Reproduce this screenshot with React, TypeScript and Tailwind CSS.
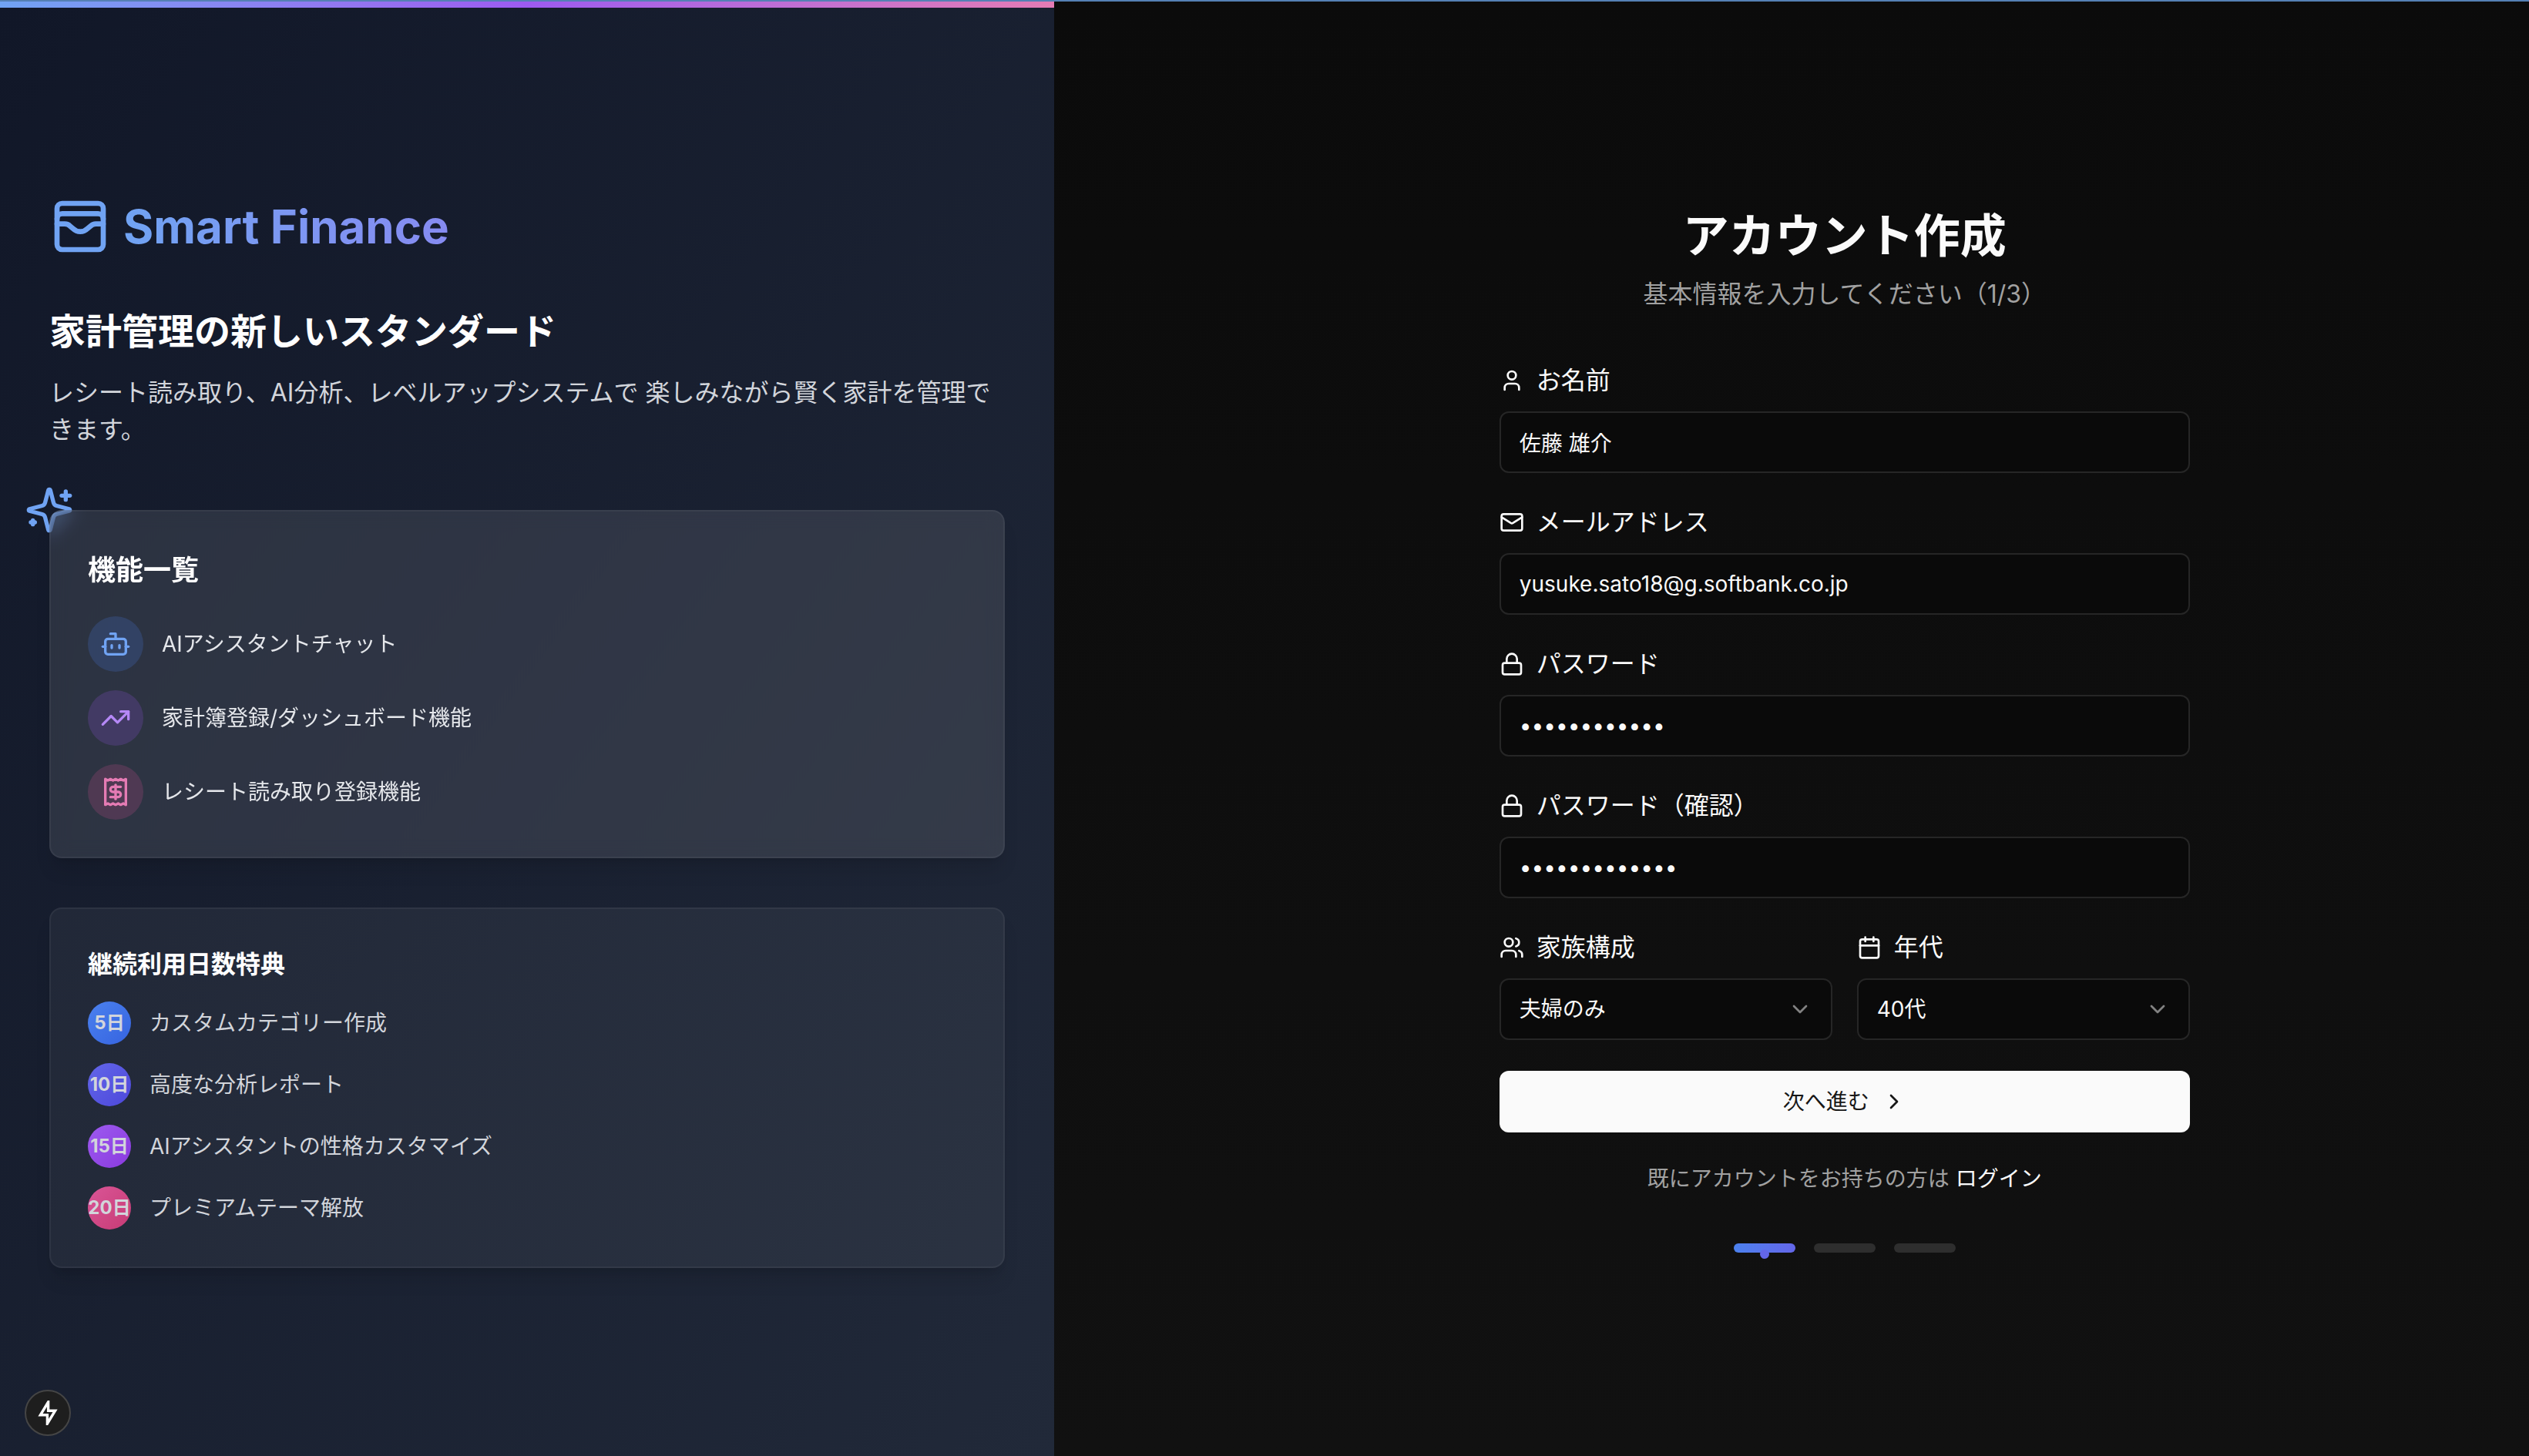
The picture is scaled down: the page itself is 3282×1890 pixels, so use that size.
import type { ReactNode } from "react";
import {
  Bot,
  Calendar,
  ChevronDown,
  ChevronRight,
  Lock,
  Mail,
  TrendingUp,
  User,
  Users,
  WalletCards,
} from "lucide-react";

const features = [
  { label: "AIアシスタントチャット", tone: "bg-[#4b81ee]/20 text-[#70a3f3]", icon: <Bot size={40} /> },
  { label: "家計簿登録/ダッシュボード機能", tone: "bg-[#9d5af0]/20 text-[#b588f6]", icon: <TrendingUp size={40} /> },
  { label: "レシート読み取り登録機能", tone: "bg-[#da5597]/20 text-[#e57bb4]", icon: <ReceiptIcon /> },
];

const rewards = [
  { days: "5日", label: "カスタムカテゴリー作成", tone: "from-[#4b81ee] to-[#3663e0]" },
  { days: "10日", label: "高度な分析レポート", tone: "from-[#6366e9] to-[#4d47da]" },
  { days: "15日", label: "AIアシスタントの性格カスタマイズ", tone: "from-[#9d5af0] to-[#8a39de]" },
  { days: "20日", label: "プレミアムテーマ解放", tone: "from-[#da5597] to-[#c73b75]" },
];

function ReceiptIcon() {
  return (
    <svg width="40" height="40" viewBox="0 0 24 24" fill="none" stroke="currentColor" strokeWidth="2" strokeLinecap="round" strokeLinejoin="round" aria-hidden="true">
      <path d="M4 2v20l2-1 2 1 2-1 2 1 2-1 2 1 2-1 2 1V2l-2 1-2-1-2 1-2-1-2 1-2-1-2 1Z" />
      <path d="M16 8h-6a2 2 0 1 0 0 4h4a2 2 0 1 1 0 4H8" />
      <path d="M12 17.5v-11" />
    </svg>
  );
}

function SparklesIcon() {
  return (
    <svg className="absolute -top-8 -left-8 size-16 text-[#70a3f3]" viewBox="0 0 24 24" fill="none" stroke="currentColor" strokeWidth="2" strokeLinecap="round" strokeLinejoin="round" aria-hidden="true">
      <path d="M9.937 15.5A2 2 0 0 0 8.5 14.063l-6.135-1.582a.5.5 0 0 1 0-.962L8.5 9.936A2 2 0 0 0 9.937 8.5l1.582-6.135a.5.5 0 0 1 .963 0L14.063 8.5A2 2 0 0 0 15.5 9.937l6.135 1.581a.5.5 0 0 1 0 .964L15.5 14.063a2 2 0 0 0-1.437 1.437l-1.582 6.135a.5.5 0 0 1-.963 0z" />
      <path d="M20 3v4" />
      <path d="M22 5h-4" />
      <path d="M4 17v2" />
      <path d="M5 18H3" />
    </svg>
  );
}

function Field({ id, label, icon, children }: { id: string; label: string; icon: ReactNode; children: ReactNode }) {
  return (
    <div className="flex flex-1 flex-col gap-4">
      <label htmlFor={id} className="flex items-center gap-4 text-[32px] leading-12">
        {icon}
        {label}
      </label>
      {children}
    </div>
  );
}

const control =
  "h-20 w-full rounded-xl border-2 border-[#262626] bg-[#0a0a0a] px-6 text-[28px] text-[#fafafa] outline-none";

function Select({ id, options }: { id: string; options: string[] }) {
  return (
    <div className="relative">
      <select id={id} className={`${control} appearance-none`}>
        {options.map((o) => (
          <option key={o}>{o}</option>
        ))}
      </select>
      <ChevronDown size={32} className="pointer-events-none absolute top-6 right-[26px] opacity-50" />
    </div>
  );
}

export default function App() {
  return (
    <div className="flex min-h-screen flex-col border-t-2 border-[#5580b4] bg-[#0a0a0a] font-[Inter,'Noto_Sans_CJK_JP',sans-serif] text-[#fafafa]">
      <div className="flex flex-1">
        <aside className="relative flex w-5/12 flex-col justify-center bg-linear-to-br from-[#111728] to-[#212939] px-16">
          <div className="absolute inset-x-0 top-0 h-2 bg-linear-to-r from-[#70a3f3] via-[#9d5af0] to-[#e57bb4]" />
          <div className="flex items-center gap-4 py-2">
            <WalletCards size={80} className="text-[#70a3f3]" />
            <h1 className="bg-linear-to-r from-[#70a3f3] to-[#868bf1] bg-clip-text text-6xl leading-18 font-bold text-transparent">
              Smart Finance
            </h1>
          </div>
          <h2 className="mt-14 text-[47px] leading-16 font-bold text-white">家計管理の新しいスタンダード</h2>
          <p className="mt-6 text-[32px] leading-12 text-[#d2d5db]">
            レシート読み取り、AI分析、レベルアップシステムで 楽しみながら賢く家計を管理できます。
          </p>
          <div className="relative mt-20">
            <SparklesIcon />
            <section className="relative rounded-2xl border-2 border-white/5 bg-white/10 p-12 shadow-xl backdrop-blur-md">
              <h3 className="mb-8 text-4xl leading-14 font-bold text-white">機能一覧</h3>
              <ul className="flex flex-col gap-6">
                {features.map((f) => (
                  <li key={f.label} className="flex items-center gap-6 text-[28px] leading-10 text-[#e5e7eb]">
                    <span className={`flex size-18 items-center justify-center rounded-full ${f.tone}`}>{f.icon}</span>
                    {f.label}
                  </li>
                ))}
              </ul>
            </section>
          </div>
          <section className="mt-16 rounded-2xl border-2 border-white/5 bg-white/5 p-12 shadow-xl">
            <h3 className="mb-6 text-[32px] leading-12 font-bold text-white">継続利用日数特典</h3>
            <ul className="flex flex-col gap-6">
              {rewards.map((r) => (
                <li key={r.days} className="flex items-center gap-6 text-[28px] leading-10 text-[#d2d5db]">
                  <span className={`flex size-14 items-center justify-center rounded-full bg-linear-to-br text-2xl font-bold whitespace-nowrap ${r.tone}`}>
                    {r.days}
                  </span>
                  {r.label}
                </li>
              ))}
            </ul>
          </section>
        </aside>

        <main className="flex flex-1 flex-col items-center justify-center bg-linear-to-b from-[#0b0b0b] to-[#111111] pl-[138px]">
          <div className="flex w-full max-w-4xl flex-col">
            <h2 className="text-center text-6xl leading-20 font-bold">アカウント作成</h2>
            <p className="mt-3 text-center text-[32px] leading-12 text-[#a1a1a1]">基本情報を入力してください（1/3）</p>
            <form className="mt-16 flex flex-col gap-10">
              <Field id="name" label="お名前" icon={<User size={32} />}>
                <input id="name" className={control} defaultValue="佐藤 雄介" />
              </Field>
              <Field id="email" label="メールアドレス" icon={<Mail size={32} />}>
                <input id="email" type="email" className={control} defaultValue="yusuke.sato18@g.softbank.co.jp" />
              </Field>
              <Field id="password" label="パスワード" icon={<Lock size={32} />}>
                <input id="password" type="password" className={control} defaultValue="abcdefghijkl" />
              </Field>
              <Field id="confirm" label="パスワード（確認）" icon={<Lock size={32} />}>
                <input id="confirm" type="password" className={control} defaultValue="abcdefghijklm" />
              </Field>
              <div className="flex gap-8">
                <Field id="family" label="家族構成" icon={<Users size={32} />}>
                  <Select id="family" options={["夫婦のみ", "独身"]} />
                </Field>
                <Field id="age" label="年代" icon={<Calendar size={32} />}>
                  <Select id="age" options={["40代", "30代"]} />
                </Field>
              </div>
              <button type="button" className="flex h-20 items-center justify-center gap-4 rounded-xl bg-[#fafafa] text-[28px] text-[#171717]">
                次へ進む
                <ChevronRight size={32} />
              </button>
            </form>
            <p className="mt-10 text-center text-[28px] leading-10 text-[#a1a1a1]">
              既にアカウントをお持ちの方は{" "}
              <a href="#login" className="text-[#fafafa]">ログイン</a>
            </p>
            <div className="mt-16 flex justify-center gap-6">
              <span className="relative h-3 w-20 rounded-full bg-linear-to-r from-[#4b81ee] to-[#6366e9]">
                <span className="absolute top-2 left-1/2 size-3 -translate-x-1/2 rounded-full bg-[#6366e9]" />
              </span>
              <span className="h-3 w-20 rounded-full bg-[#2e2e2e]" />
              <span className="h-3 w-20 rounded-full bg-[#2e2e2e]" />
            </div>
          </div>
        </main>
      </div>

      <button type="button" aria-label="開発ツール" className="fixed bottom-[26px] left-8 flex size-15 items-center justify-center rounded-full border-2 border-[#454545] bg-[#1e1e1e]">
        <svg width="32" height="32" viewBox="0 0 16 16" fill="none" stroke="white" strokeWidth="1.7" aria-hidden="true">
          <path d="M8.3 1 3.2 9.4h4.5V15l5.1-8.4H8.3Z" />
        </svg>
      </button>
    </div>
  );
}
